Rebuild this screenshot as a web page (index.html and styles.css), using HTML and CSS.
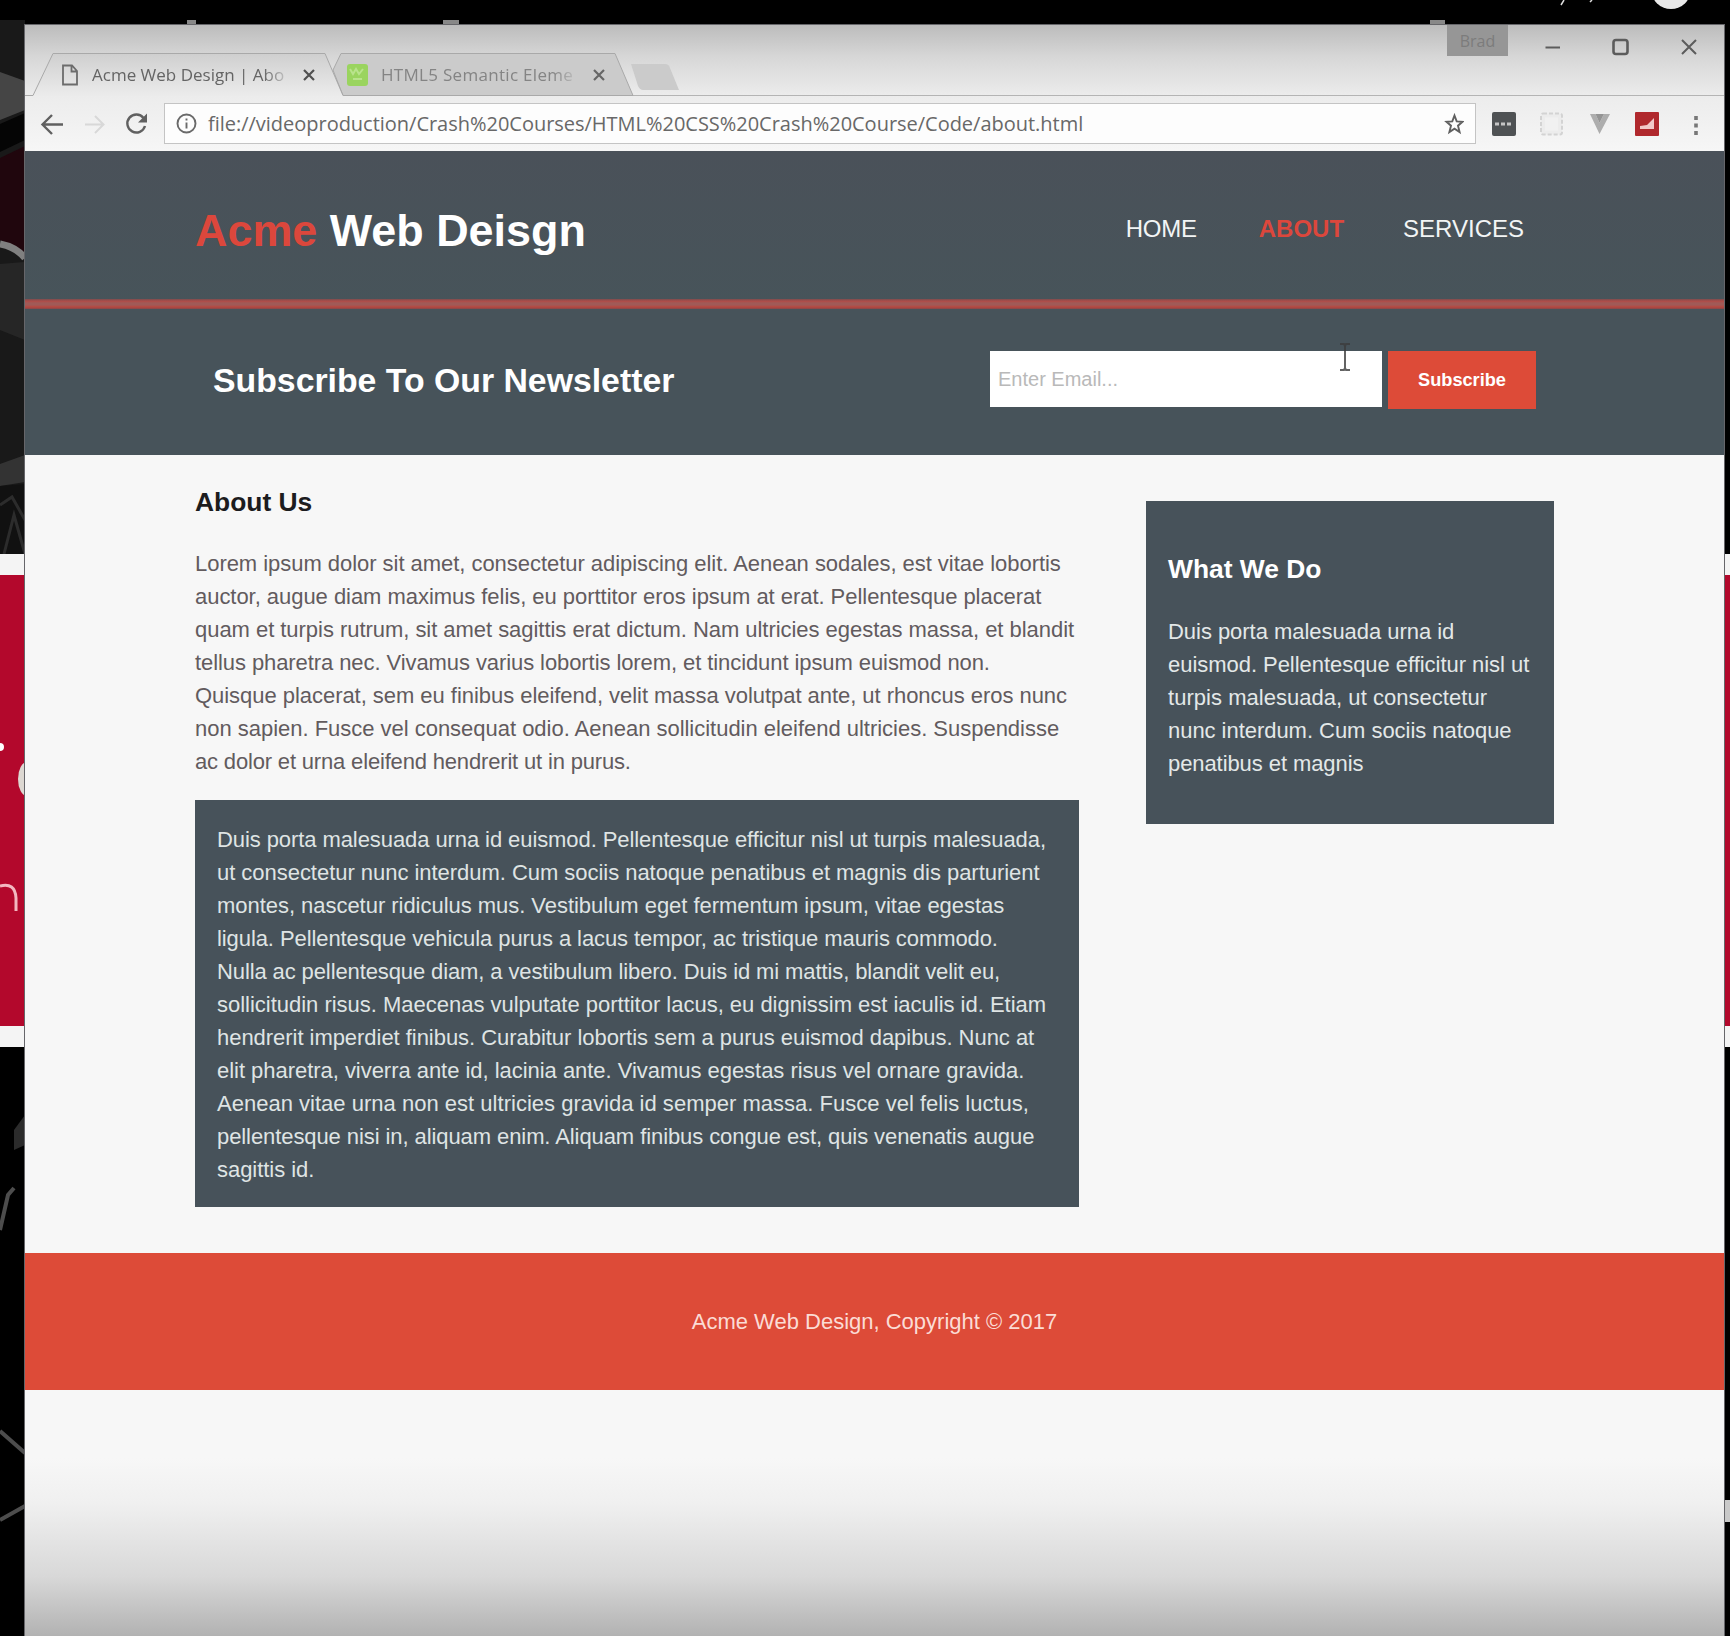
FILE: index.html
```html
<!DOCTYPE html>
<html lang="en">
<head>
<meta charset="utf-8">
<title>Acme Web Design | About</title>
<link rel="stylesheet" href="styles.css">
</head>
<body>
<svg class="wallpaper" width="1730" height="1636" viewBox="0 0 1730 1636" aria-hidden="true">
  <rect width="1730" height="1636" fill="#000"/>
  <rect y="20" width="25" height="535" fill="#191919"/>
  <path d="M0 72L25 81V110L0 120Z" fill="#454545"/>
  <path d="M0 124L25 113V140L0 152Z" fill="#050505"/>
  <path d="M0 158L25 146V252L0 240Z" fill="#20060d"/>
  <path d="M0 244Q16 247 25 258" stroke="#808080" stroke-width="7" fill="none"/>
  <path d="M0 264L25 262V340L0 330Z" fill="#262626"/>
  <path d="M0 464L25 455V482L0 486Z" fill="#333"/>
  <path d="M0 486L25 484V554H0Z" fill="#111"/>
  <path d="M0 505L12 497L25 520M4 554L14 515L25 554" stroke="#2c2c2c" stroke-width="3" fill="none"/>
  <rect y="554" width="1730" height="493" fill="#f4f4f4"/>
  <rect y="575" width="1730" height="451" fill="#b3082c"/>
  <circle cx="0" cy="747" r="4" fill="#fff"/>
  <ellipse cx="27" cy="779" rx="9" ry="17" fill="#ddd8d2"/>
  <path d="M0 886Q15 882 16 898V911" stroke="#f3b7c0" stroke-width="3" fill="none"/>
  <path d="M0 1230L8 1195L14 1188M0 1431L25 1453M0 1520L25 1506" stroke="#4d4d4d" stroke-width="4" fill="none"/>
  <path d="M14 1130L25 1115V1145L14 1150Z" fill="#2b2b2b"/>
  <rect x="1725" y="1500" width="5" height="22" fill="#c9c9c9"/>
  <path d="M187 20h9v5h-9zM443 20h16v5h-16zM1430 20h15v5h-15z" fill="#888"/>
  <circle cx="1671" cy="-11" r="20" fill="#e8e8e8"/>
  <path d="M1561 5L1564 0M1590 2L1592 0" stroke="#ddd" stroke-width="1.5"/>
</svg>

<div class="window">
  <div class="titlebar">
    <svg class="tab-shapes" width="1699" height="72" viewBox="25 25 1699 72" aria-hidden="true">
      <path d="M1725 95.500H633" stroke="#b4b4b4" fill="none"/>
      <path d="M333 70L341 53.500H615L633 95.500H343Z" fill="#cbcbcb" stroke="#a9a9a9"/>
      <path class="active-tab" d="M25 96.500H33L53 53.500H325L343 96.500Z" fill="url(#tab)"/>
      <path d="M25 95.500H33L53 53.500H325L343 95.500" fill="none" stroke="#a9a9a9"/>
      <path d="M631 64H665Q669 64 670 68L679 90H643Q640 90 638 86Z" fill="#cbcbcb"/>
      <defs><linearGradient id="tab" x2="0" y2="1"><stop stop-color="#cfcfcf"/><stop offset="1" stop-color="#ececec"/></linearGradient></defs>
    </svg>
    <div class="tab">
      <svg width="18" height="22" viewBox="0 0 18 22" fill="none" stroke="#6c6c6c" stroke-width="1.800"><path d="M2 1.500H11L16 7V20.500H2ZM10.500 2V7.500H16"/></svg>
      <span class="tab-title">Acme Web Design | Abo</span>
      <svg class="x" width="12" height="12" viewBox="0 0 12 12" stroke="#505050" stroke-width="2.200"><path d="M1 1L11 11M11 1L1 11"/></svg>
    </div>
    <div class="tab second">
      <svg width="24" height="24" viewBox="0 0 24 24"><rect x="1" y="1" width="21" height="22" rx="3" fill="#9ad45f"/><path d="M4 6L7 11L10 6L13 11L17 6M7 16H16" stroke="#b9e38c" stroke-width="2" fill="none"/></svg>
      <span class="tab-title">HTML5 Semantic Eleme</span>
      <svg class="x" width="12" height="12" viewBox="0 0 12 12" stroke="#666" stroke-width="2.200"><path d="M1 1L11 11M11 1L1 11"/></svg>
    </div>
    <div class="controls">
      <span class="user">Brad</span>
      <svg width="180" height="31" viewBox="1530 25 180 31" fill="none" stroke="#5c5c5c" stroke-width="2"><path d="M1545.500 47.500H1560M1682 40L1696 54M1696 40L1682 54"/><rect x="1613.500" y="40" width="14" height="14" rx="2.500" stroke-width="2.600"/></svg>
    </div>
  </div>

  <div class="toolbar">
    <svg width="124" height="30" viewBox="35 108 124 30" fill="none" stroke="#606060" stroke-width="2.400">
      <path d="M63 123.500H43M52 114L42.500 123.500L52 133"/>
      <path d="M85 123.500H103M95 115L103.500 123.500L95 132" stroke="#d8d8d8" stroke-width="2"/>
      <path d="M143.500 117A9 9 0 1 0 145 125"/><path d="M147 112.500V121.500H138Z" fill="#606060" stroke="none"/>
    </svg>
    <div class="address">
      <svg width="22" height="22" viewBox="0 0 22 22" fill="none" stroke="#6a6a6a" stroke-width="1.900"><circle cx="10.500" cy="10.500" r="9"/><path d="M10.500 9.500V15.500M10.500 5.500V7.500"/></svg>
      <span class="url">file://videoproduction/Crash%20Courses/HTML%20CSS%20Crash%20Course/Code/about.html</span>
      <svg width="22" height="22" viewBox="0 0 22 22" fill="none" stroke="#606060" stroke-width="1.900"><path d="M12.500 2.500L14.700 8.400L20.500 8.800L16 12.700L17.600 19L12.500 15.600L7.400 19L9 12.700L4.500 8.800L10.300 8.400Z"/></svg>
    </div>
    <svg width="220" height="30" viewBox="1486 108 220 30">
      <rect x="1493" y="111" width="24" height="24" rx="2" fill="#4f5254"/><path d="M1496 123H1514" stroke="#c5c5c5" stroke-width="3" stroke-dasharray="4 2"/>
      <rect x="1542" y="112.500" width="21" height="21" rx="2" fill="#ececec" stroke="#d3d3d3" stroke-width="2" stroke-dasharray="4 2"/><rect x="1546" y="116.500" width="13" height="13" fill="#f1f1f1"/>
      <path d="M1591 113H1596.500L1600.500 122L1605 113H1611L1600.500 133Z" fill="#adadad"/><path d="M1596.500 113H1605L1600.500 122Z" fill="#949494"/>
      <rect x="1636" y="111" width="24" height="24" rx="1" fill="#b0282d"/><path d="M1641 128V125L1648 124L1655 117V128Z" fill="#f2c8c8"/>
      <path d="M1697 115V134" stroke="#777" stroke-width="3.600" stroke-dasharray="4 3.500"/>
    </svg>
  </div>

  <main class="page">
    <header class="site-header">
      <h1><span class="accent">Acme</span> Web Deisgn</h1>
      <nav><a class="home">HOME</a><a class="current">ABOUT</a><a>SERVICES</a></nav>
    </header>
    <section class="newsletter">
      <h2>Subscribe To Our Newsletter</h2>
      <form>
        <div class="email">Enter Email...</div>
        <button type="button">Subscribe</button>
      </form>
      <svg class="cursor" width="14" height="28" viewBox="0 0 14 28" fill="none" stroke="#3c3c3c" stroke-opacity=".8" stroke-width="2"><path d="M2 1H6L7 3L8 1H12M7 2V26M2 27H6L7 25L8 27H12"/></svg>
    </section>
    <div class="columns">
      <article>
        <h3>About Us</h3>
        <p class="intro">
          <span>Lorem ipsum dolor sit amet, consectetur adipiscing elit. Aenean sodales, est vitae lobortis</span>
          <span>auctor, augue diam maximus felis, eu porttitor eros ipsum at erat. Pellentesque placerat</span>
          <span>quam et turpis rutrum, sit amet sagittis erat dictum. Nam ultricies egestas massa, et blandit</span>
          <span>tellus pharetra nec. Vivamus varius lobortis lorem, et tincidunt ipsum euismod non.</span>
          <span>Quisque placerat, sem eu finibus eleifend, velit massa volutpat ante, ut rhoncus eros nunc</span>
          <span>non sapien. Fusce vel consequat odio. Aenean sollicitudin eleifend ultricies. Suspendisse</span>
          <span>ac dolor et urna eleifend hendrerit ut in purus.</span>
        </p>
        <p class="dark">
          <span>Duis porta malesuada urna id euismod. Pellentesque efficitur nisl ut turpis malesuada,</span>
          <span>ut consectetur nunc interdum. Cum sociis natoque penatibus et magnis dis parturient</span>
          <span>montes, nascetur ridiculus mus. Vestibulum eget fermentum ipsum, vitae egestas</span>
          <span>ligula. Pellentesque vehicula purus a lacus tempor, ac tristique mauris commodo.</span>
          <span>Nulla ac pellentesque diam, a vestibulum libero. Duis id mi mattis, blandit velit eu,</span>
          <span>sollicitudin risus. Maecenas vulputate porttitor lacus, eu dignissim est iaculis id. Etiam</span>
          <span>hendrerit imperdiet finibus. Curabitur lobortis sem a purus euismod dapibus. Nunc at</span>
          <span>elit pharetra, viverra ante id, lacinia ante. Vivamus egestas risus vel ornare gravida.</span>
          <span>Aenean vitae urna non est ultricies gravida id semper massa. Fusce vel felis luctus,</span>
          <span>pellentesque nisi in, aliquam enim. Aliquam finibus congue est, quis venenatis augue</span>
          <span>sagittis id.</span>
        </p>
      </article>
      <aside>
        <h3>What We Do</h3>
        <p>
          <span>Duis porta malesuada urna id</span>
          <span>euismod. Pellentesque efficitur nisl ut</span>
          <span>turpis malesuada, ut consectetur</span>
          <span>nunc interdum. Cum sociis natoque</span>
          <span>penatibus et magnis</span>
        </p>
      </aside>
    </div>
    <footer>Acme Web Design, Copyright © 2017</footer>
  </main>
</div>
</body>
</html>
```
FILE: styles.css
```css
* { box-sizing: border-box; }
body {
  margin: 0;
  height: 1636px;
  overflow: hidden;
  background: #000;
  font-family: "Liberation Sans", Arial, sans-serif;
}
h1, h2, h3, p { margin: 0; }
svg { display: block; flex: none; }
.wallpaper { position: absolute; inset: 0; z-index: -1; }

.window {
  position: relative;
  display: flex;
  flex-direction: column;
  width: 1699px;
  height: 1611px;
  margin: 25px 0 0 25px;
  background: #f7f7f7;
  box-shadow: 0 0 0 1px #66666a;
}

.titlebar {
  position: relative;
  display: flex;
  height: 71px;
  background: linear-gradient(#bcbcbc, #d7d7d7 45%, #ececec);
  font-family: "Open Sans", "Noto Sans", sans-serif;
  font-size: 17px;
  color: #646464;
}
.tab-shapes { position: absolute; inset: 0; }
.tab {
  position: relative;
  display: flex;
  align-items: center;
  flex: none;
  width: 285px;
  padding: 30px 0 2px 36px;
}
.tab-title {
  flex: none;
  width: 204px;
  margin-left: 13px;
  white-space: nowrap;
  -webkit-mask-image: linear-gradient(90deg, #000 84%, transparent 98%);
  mask-image: linear-gradient(90deg, #000 84%, transparent 98%);
}
.tab .x { margin-left: 7px; }
.tab.second { color: #848484; }
.tab.second .tab-title { margin-left: 11px; letter-spacing: 0.3px; }
.tab.second .x { margin-left: 8px; }
.controls { position: relative; display: flex; margin-left: auto; gap: 22px; padding-right: 14px; }
.user {
  display: grid;
  place-items: center;
  width: 61px;
  height: 31px;
  background: #969696;
  color: #7c7c7c;
  font-size: 16px;
}

.toolbar {
  display: flex;
  align-items: center;
  height: 55px;
  padding: 0 19px 0 10px;
  background: linear-gradient(#ececec, #f6f6f6);
}
.address {
  display: flex;
  align-items: center;
  width: 1312px;
  height: 41px;
  margin: 0 9px 0 5px;
  padding: 0 11px;
  background: #fdfdfd;
  border: 1px solid #c4c4c4;
}
.url {
  flex: 1;
  margin-left: 10px;
  font-family: "Open Sans", "Noto Sans", sans-serif;
  font-size: 20px;
  letter-spacing: -0.02px;
  color: #686868;
  white-space: nowrap;
}

.page { flex: 1; background: linear-gradient(#f7f7f7 88%, #f0f0f0 91%, #d8d8d8 96%, #b2b2b2); }
.site-header {
  display: flex;
  justify-content: space-between;
  align-items: center;
  height: 158px;
  padding: 6px 200px 9px 170px;
  background:
    linear-gradient(#7a4d50, #b04c48 22%, #a05a57 40%, #a05a57 60%, #b8473f 80%, #84484a) bottom / 100% 10px no-repeat,
    linear-gradient(#4a5159, #47545a);
  color: #fff;
}
h1 { font-size: 44.9px; padding-top: 4px; }
.accent, .current { color: #dc473c; }
nav { display: flex; gap: 59px; font-size: 24px; color: #f2f5f5; }
.home { margin-right: 3px; letter-spacing: -0.25px; }
.current { font-weight: bold; }

.newsletter {
  position: relative;
  display: flex;
  justify-content: space-between;
  align-items: center;
  height: 146px;
  padding: 0 188px 4px 188px;
  background: #47535a;
}
h2 { font-size: 33.8px; color: #fff; padding-top: 1px; }
form { display: flex; gap: 6px; }
.email {
  width: 392px;
  height: 56px;
  padding: 0 8px;
  background: #fff;
  font-size: 20px;
  line-height: 56px;
  color: #b9b9b9;
}
button {
  width: 148px;
  height: 58px;
  padding: 0;
  border: 0;
  background: #dd4b38;
  color: #fff;
  font: bold 18.2px "Liberation Sans", Arial, sans-serif;
}
.cursor { position: absolute; left: 1313px; top: 34px; }

.columns {
  display: flex;
  justify-content: space-between;
  align-items: flex-start;
  height: 798px;
  padding: 0 170px;
  font-size: 22px;
  line-height: 33px;
}
.columns p span { display: table; white-space: nowrap; letter-spacing: -0.04px; }
article { width: 884px; }
h3 { font-size: 26.4px; color: #1c1c1e; line-height: 33px; }
article h3 { padding-top: 31px; }
.intro { margin-top: 28px; color: #625b5e; }
.dark { margin-top: 22px; padding: 23px 22px 21px; background: #47525a; color: #dfe4e4; }
aside {
  width: 408px;
  height: 323px;
  margin-top: 46px;
  padding: 52px 22px 0;
  background: #47525a;
  color: #e3e8e8;
}
aside h3 { color: #fff; }
aside p { margin-top: 29px; }

.columns .intro span:nth-child(4) { letter-spacing: -0.083px; }
.columns .intro span:nth-child(6) { letter-spacing: -0.02px; }
.columns .intro span:nth-child(7) { letter-spacing: -0.17px; }
.columns .dark span:nth-child(1),
.columns .dark span:nth-child(4),
.columns .dark span:nth-child(10) { letter-spacing: -0.083px; }
.columns .dark span:nth-child(2),
.columns .dark span:nth-child(3),
.columns .dark span:nth-child(8) { letter-spacing: -0.035px; }
.columns .dark span:nth-child(5) { letter-spacing: -0.11px; }
.columns .dark span:nth-child(6) { letter-spacing: -0.013px; }
.columns .dark span:nth-child(9) { letter-spacing: 0.015px; }
.columns aside span:nth-child(3) { letter-spacing: 0.034px; }
.columns aside span:nth-child(5) { letter-spacing: -0.08px; }

footer {
  display: grid;
  place-items: center;
  height: 137px;
  background: #dd4b38;
  color: #fbdcd5;
  font-size: 22px;
}
```
